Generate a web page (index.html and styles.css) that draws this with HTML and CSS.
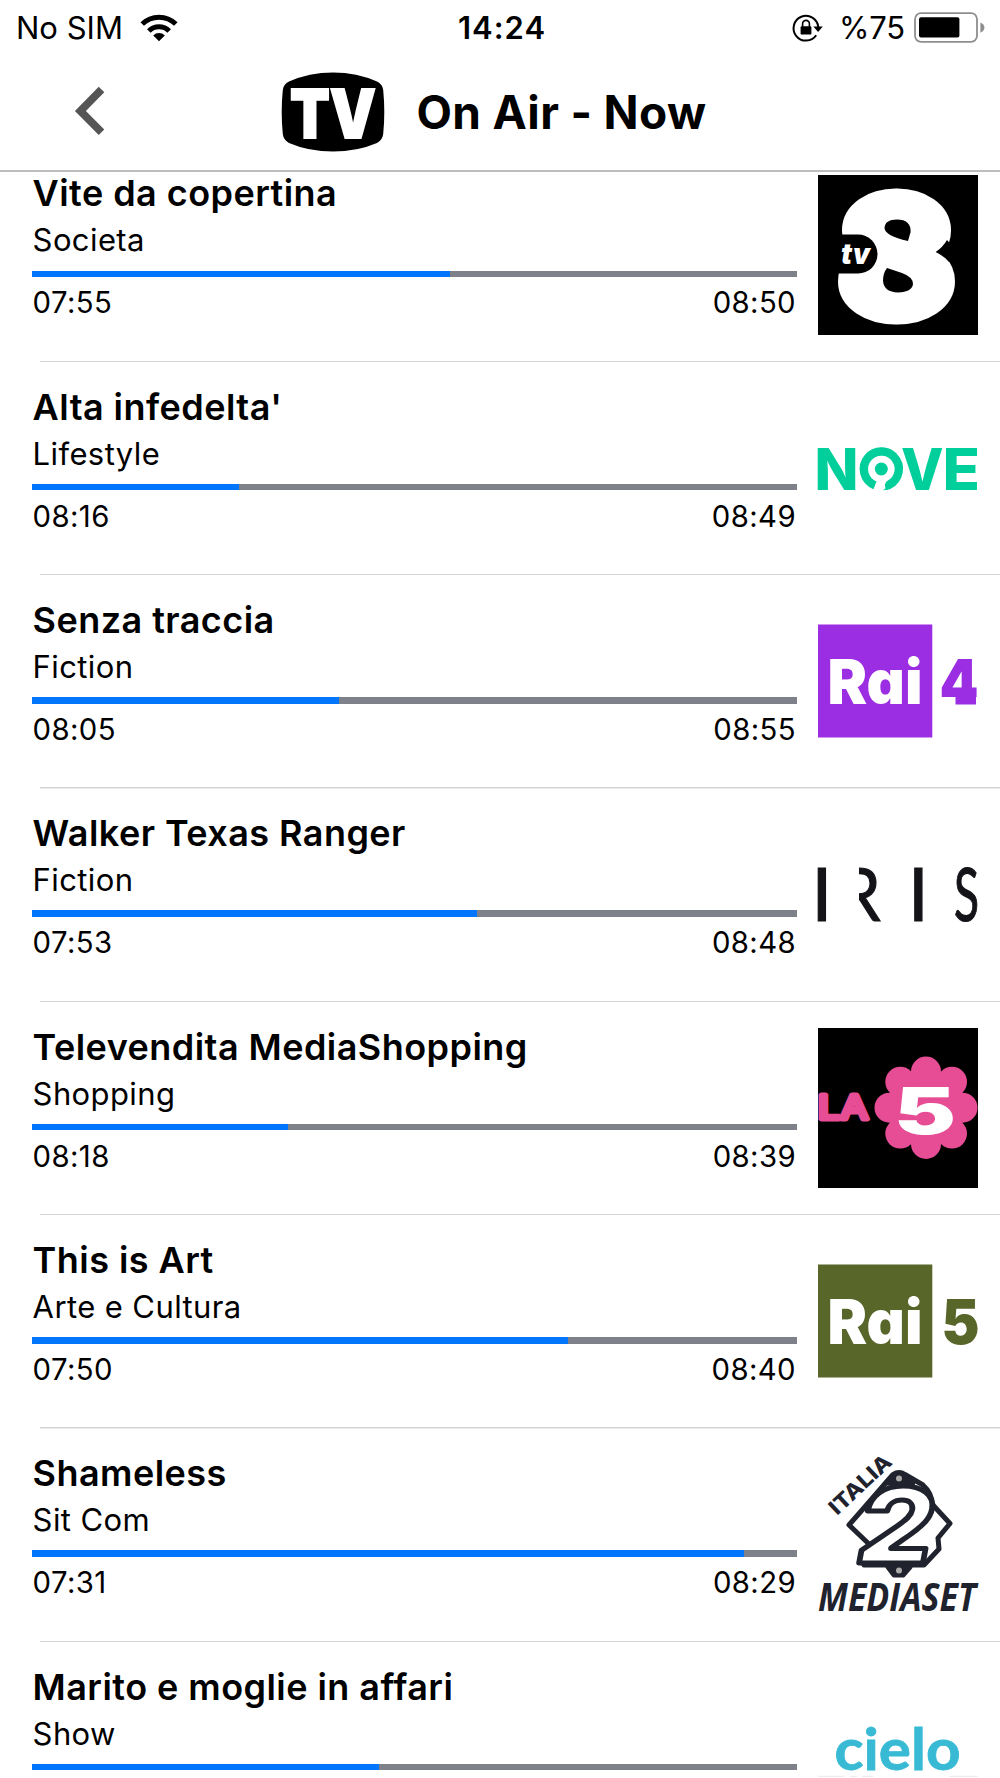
FILE: index.html
```html
<!DOCTYPE html>
<html lang="it">
<head>
<meta charset="utf-8">
<title>On Air - Now</title>
<link rel="stylesheet" href="styles.css">
</head>
<body>
<div class="screen">
  <div class="status">
    <div class="status-left">
      <span class="carrier">No SIM</span>
      <svg class="wifi" width="38" height="28" viewBox="0 0 38 28">
        <path d="M19 27.2 L13.2 21.4 A8.4 8.4 0 0 1 24.8 21.4Z"/>
        <path d="M8.8 17 A14.6 14.6 0 0 1 29.2 17" fill="none" stroke="#000" stroke-width="5"/>
        <path d="M2.2 10 A24 24 0 0 1 35.8 10" fill="none" stroke="#000" stroke-width="5"/>
      </svg>
    </div>
    <span class="clock">14:24</span>
    <div class="status-right">
      <svg class="lock" width="32" height="28" viewBox="0 0 32 28">
        <path d="M24.2 21.2 A12.4 12.4 0 1 1 26.3 13" fill="none" stroke="#000" stroke-width="2"/>
        <path d="M21.4 12.4 H30.8 L26.1 18Z"/>
        <rect x="8.6" y="12.2" width="10.8" height="8.4" rx="1.2"/>
        <path d="M10.6 13 V9.8 A3.4 3.4 0 0 1 17.4 9.8 V13" fill="none" stroke="#000" stroke-width="1.6"/>
      </svg>
      <span class="percent">%75</span>
      <svg class="battery" width="71" height="32" viewBox="0 0 71 32">
        <rect x="1" y="1.2" width="62" height="28.6" rx="6" fill="none" stroke="#8e8e8e" stroke-width="1.8"/>
        <rect x="5" y="5.2" width="40.4" height="20.4" rx="2"/>
        <path d="M66.4 10.4 Q70.4 12 70.4 15.6 Q70.4 19.2 66.4 20.8Z" fill="#8e8e8e"/>
      </svg>
    </div>
  </div>
  <div class="navbar">
    <svg class="back" width="32" height="50" viewBox="0 0 32 50"><path d="M26.5 3.6 L5.4 25 L26.5 46.2" fill="none" stroke="#555" stroke-width="7.8"/></svg>
    <svg class="tvlogo" width="104" height="80" viewBox="0 0 104 80">
      <path d="M8 9.5 Q28 .4 52 .4 Q76 .4 96 9.5 Q101.500 12 102.200 18 Q104.400 40 102.200 62 Q101.500 68 96 71 Q76 79.600 52 79.600 Q28 79.600 8 71 Q2.500 68 1.800 62 Q-.4 40 1.800 18 Q2.500 12 8 9.500Z"/>
      <text x="9" y="66" font-size="67.500" font-weight="900" fill="#fff" stroke="#fff" stroke-width="1.800" textLength="86" lengthAdjust="spacingAndGlyphs">TV</text>
    </svg>
    <h1 class="heading">On Air - Now</h1>
  </div>
  <div class="list">
    <div class="rows">
      <div class="row">
        <div class="info"><div class="title">Vite da copertina</div><div class="genre">Societa</div>
          <div class="bar"><div class="fill" style="width:54.7%"></div></div>
          <div class="times"><span>07:55</span><span>08:50</span></div></div>
        <svg class="logo" width="160" height="160" viewBox="0 0 160 160">
          <rect width="160" height="160"/>
          <text x="27.500" y="136" font-size="149" font-weight="900" fill="#fff" stroke="#fff" stroke-width="25" stroke-linejoin="round" textLength="102" lengthAdjust="spacingAndGlyphs">8</text>
          <rect x="62" y="40" width="36" height="82" fill="#fff"/>
          <path d="M66.500 53 Q67 44.500 79 44.500 Q93 44.500 92.600 57 L90 66 Q67 61 66.500 53Z"/>
          <path d="M69 93 L84 98 Q95 102 95 109 Q94 117 80 117.500 Q66 117 65 106 Q65 98 69 93Z"/>
          <path d="M14 59.600 H40 A19.500 19.500 0 0 1 40 98.600 H14Z"/>
          <path d="M117.700 77 Q125 72 129 65 L140 77 L131 87 Q126 81 117.700 77Z"/>
          <text x="23" y="88.600" font-size="28" font-weight="900" font-style="italic" fill="#fff" textLength="29" lengthAdjust="spacingAndGlyphs">tv</text>
        </svg>
      </div>
      <div class="row">
        <div class="info"><div class="title">Alta infedelta'</div><div class="genre">Lifestyle</div>
          <div class="bar"><div class="fill" style="width:27.1%"></div></div>
          <div class="times"><span>08:16</span><span>08:49</span></div></div>
        <svg class="logo" width="160" height="160" viewBox="0 0 160 160" fill="#00cf9b">
          <text x="-3.500" y="102" font-size="57.500" font-weight="800" textLength="44" lengthAdjust="spacingAndGlyphs">N</text>
          <path d="M67 98.100 A17.500 17.500 0 1 0 57 97.300" fill="none" stroke="#00cf9b" stroke-width="8.400"/>
          <path d="M64.500 102.500 Q72 98 76 88 L80 92 Q76 101 64.500 102.500Z"/>
          <circle cx="63.300" cy="81" r="6.500"/>
          <path d="M60.500 104 L69 88" stroke="#fff" stroke-width="4"/>
          <text x="83" y="102" font-size="57.500" font-weight="800" textLength="42.500" lengthAdjust="spacingAndGlyphs">V</text>
          <text x="124.500" y="102" font-size="57.500" font-weight="800" textLength="37.500" lengthAdjust="spacingAndGlyphs">E</text>
        </svg>
      </div>
      <div class="row">
        <div class="info"><div class="title">Senza traccia</div><div class="genre">Fiction</div>
          <div class="bar"><div class="fill" style="width:40.1%"></div></div>
          <div class="times"><span>08:05</span><span>08:55</span></div></div>
        <svg class="logo" width="160" height="160" viewBox="0 0 160 160">
          <rect y="23.500" width="114.300" height="113" fill="#9b2de3"/>
          <text class="rai" x="9.500" y="103" font-size="61.500" font-weight="900" fill="#fff" textLength="95" lengthAdjust="spacingAndGlyphs">Rai</text>
          <text x="121.500" y="103" font-size="62" font-weight="900" fill="#9b2de3" textLength="39" lengthAdjust="spacingAndGlyphs">4</text>
          <path d="M137.500 95.500 H158 V103.500 H137.500Z" fill="#9b2de3"/>
        </svg>
      </div>
      <div class="row">
        <div class="info"><div class="title">Walker Texas Ranger</div><div class="genre">Fiction</div>
          <div class="bar"><div class="fill" style="width:58.2%"></div></div>
          <div class="times"><span>07:53</span><span>08:48</span></div></div>
        <svg class="logo iris" width="160" height="160" viewBox="0 0 160 160" fill="#141318">
          <text x="-6.500" y="106" font-size="74">I</text>
          <text x="22.500" y="106" font-size="74" textLength="40" lengthAdjust="spacingAndGlyphs">R</text>
          <rect x="20" y="50" width="21" height="58" fill="#fff" stroke="none"/>
          <text x="90" y="106" font-size="74">I</text>
          <text x="136" y="106" font-size="74" textLength="25" lengthAdjust="spacingAndGlyphs">S</text>
        </svg>
      </div>
      <div class="row">
        <div class="info"><div class="title">Televendita MediaShopping</div><div class="genre">Shopping</div>
          <div class="bar"><div class="fill" style="width:33.5%"></div></div>
          <div class="times"><span>08:18</span><span>08:39</span></div></div>
        <svg class="logo" width="160" height="160" viewBox="0 0 160 160">
          <rect width="160" height="160"/>
          <g fill="#e64d94">
            <circle cx="108" cy="79.700" r="39"/>
            <circle cx="108" cy="43.500" r="15"/><circle cx="108" cy="116" r="15"/>
            <circle cx="71.500" cy="79.700" r="15"/><circle cx="144.500" cy="79.700" r="15"/>
            <circle cx="82.300" cy="53.800" r="15"/><circle cx="134" cy="53.800" r="15"/>
            <circle cx="82.300" cy="105.600" r="15"/><circle cx="134" cy="105.600" r="15"/>
            <text x="0" y="91" font-size="33" font-weight="400" stroke="#e64d94" stroke-width="5" stroke-linejoin="round" textLength="50" lengthAdjust="spacingAndGlyphs">LA</text>
          </g>
          <text x="76" y="105.500" font-size="64" font-weight="900" fill="#fff" textLength="62" lengthAdjust="spacingAndGlyphs">5</text>
        </svg>
      </div>
      <div class="row">
        <div class="info"><div class="title">This is Art</div><div class="genre">Arte e Cultura</div>
          <div class="bar"><div class="fill" style="width:70%"></div></div>
          <div class="times"><span>07:50</span><span>08:40</span></div></div>
        <svg class="logo" width="160" height="160" viewBox="0 0 160 160">
          <rect y="23.500" width="114.300" height="113" fill="#586629"/>
          <text class="rai" x="9.500" y="103" font-size="61.500" font-weight="900" fill="#fff" textLength="95" lengthAdjust="spacingAndGlyphs">Rai</text>
          <text x="123.500" y="103" font-size="62" font-weight="900" fill="#586629" textLength="38" lengthAdjust="spacingAndGlyphs">5</text>
        </svg>
      </div>
      <div class="row">
        <div class="info"><div class="title">Shameless</div><div class="genre">Sit Com</div>
          <div class="bar"><div class="fill" style="width:93.1%"></div></div>
          <div class="times"><span>07:31</span><span>08:29</span></div></div>
        <svg class="logo" width="160" height="160" viewBox="0 0 160 160" fill="#20232d">
          <g stroke="#20232d" stroke-width="5" stroke-linejoin="round">
            <path d="M75 19.500 Q81 15.500 87 19.500 L105 30 Q114 38 114 49 L132 68.500 L120 83 L121 94 L106 110 H86 Q81 121 75 110 H46 L43 103 L52 90 L31 70 L45 54Z" fill="#fff"/>
            <path d="M68 28 L77 19 H85 L95 28Z"/>
            <path d="M70 112 H92 L85 120 H76Z"/>
          </g>
          <circle cx="81" cy="23.500" r="3" fill="#aaa"/><circle cx="81" cy="115.500" r="3" fill="#aaa"/>
          <text class="two" x="40" y="108" font-size="104" font-weight="800" fill="#fff" stroke="#20232d" stroke-width="5" stroke-linejoin="round" textLength="76" lengthAdjust="spacingAndGlyphs">2</text>
          <text transform="translate(19 61) rotate(-43)" font-size="21" font-weight="800" textLength="77" lengthAdjust="spacingAndGlyphs">ITALIA</text>
          <text class="mediaset" x="0" y="156" font-size="38.500" font-weight="700" textLength="158" lengthAdjust="spacingAndGlyphs">MEDIASET</text>
        </svg>
      </div>
      <div class="row">
        <div class="info"><div class="title">Marito e moglie in affari</div><div class="genre">Show</div>
          <div class="bar"><div class="fill" style="width:45.3%"></div></div></div>
        <svg class="logo" width="160" height="160" viewBox="0 0 160 160">
          <text class="cielo" x="16.500" y="102" font-size="58" font-weight="700" fill="#38bad4" stroke="#38bad4" stroke-width=".8" textLength="126" lengthAdjust="spacingAndGlyphs">cielo</text>
          <path d="M0 108.500 H26.500 M32 108.500 H39 M44 108.500 H55.500 M131.500 108.500 H160" stroke="#eee" stroke-width="1.500"/>
        </svg>
      </div>
    </div>
  </div>
</div>
</body>
</html>
```
FILE: styles.css
```css
* { box-sizing: border-box; }
body { margin: 0; background: #fff; color: #000; font-family: Inter, "Liberation Sans", sans-serif; }
svg { overflow: visible; }
.screen { width: 1000px; height: 1778px; overflow: hidden; display: flex; flex-direction: column; }
.status { height: 55px; flex: none; display: grid; grid-template-columns: 1fr auto 1fr; align-items: center; padding: 0 15px 0 16px; font-size: 31px; line-height: 55px; }
.status-left, .status-right { display: flex; align-items: center; }
.status-right { justify-content: flex-end; }
.wifi { margin-left: 17px; }
.clock { font-weight: 600; letter-spacing: 1px; padding-left: 3px; }
.lock { margin-right: 15px; }
.percent { letter-spacing: -.2px; }
.battery { margin-left: 9px; }
.navbar { height: 117px; flex: none; display: flex; align-items: flex-start; border-bottom: 2px solid #bdbdbd; padding-left: 75px; }
.back { margin-top: 30.500px; }
.tvlogo { margin: 17px 0 0 174px; }
.heading { margin: 26.500px 0 0 31.500px; font-size: 46px; line-height: 60px; font-weight: 700; letter-spacing: .35px; white-space: nowrap; }
.list { flex: 1; min-height: 0; overflow: hidden; }
.rows { margin-top: -23.300px; }
.row { height: 213.333px; display: flex; align-items: flex-start; padding-left: 32px; background: linear-gradient(#d4d4d6, #d4d4d6) right bottom / 960px 1.5px no-repeat; }
.info { width: 765px; padding-top: 20.500px; }
.title { font-size: 36px; line-height: 48px; font-weight: 600; white-space: nowrap; letter-spacing: .45px; padding-left: .6px; }
.genre { font-size: 31px; line-height: 46px; letter-spacing: .4px; padding-left: .6px; }
.bar { height: 6.667px; margin-top: 7.300px; background: #7e818a; }
.fill { height: 100%; background: #0076ff; }
.times { display: flex; justify-content: space-between; margin-top: 4.200px; font-size: 29.300px; line-height: 44px; letter-spacing: .4px; padding: 0 1px 0 .6px; }
.logo { margin: 26px 0 0 21px; flex: none; }
.rai { font-feature-settings: "cv11"; }
.iris { font-family: Lato, sans-serif; stroke: #141318; stroke-width: 1.200px; }
.two { font-style: italic; }
.mediaset { font-family: "Open Sans", sans-serif; font-style: italic; }
.cielo { font-family: Lato, sans-serif; }
```
